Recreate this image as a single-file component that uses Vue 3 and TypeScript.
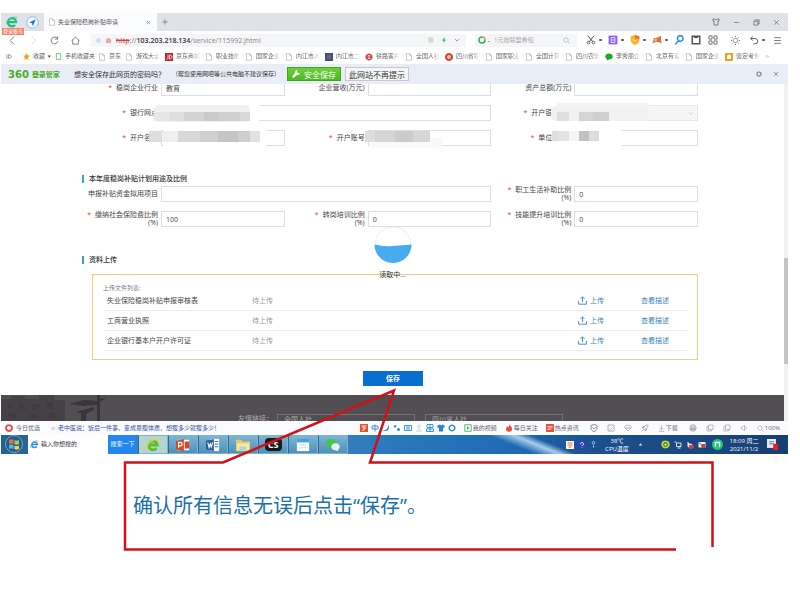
<script setup lang="ts">
import { h, type FunctionalComponent } from 'vue'

interface Shape { d: string; f?: string; s?: string; w?: number }

const G = '#666b70'
const icons: Record<string, Shape[]> = {
  browser: [{ d: 'M2.5 8h11A5.5 5.5 0 1 0 12 12', s: '#1fbf7a', w: 3 }, { d: 'M1 11C0 4 8 0 15 2', s: '#49d394', w: 1.2 }],
  browserOld: [{ d: 'M3 8h10A5 5 0 1 0 12 11.500', s: '#5cc02a', w: 3.2 }, { d: 'M1 13C0 6 8 0 15 2', s: '#e9d53c', w: 1.5 }],
  ie: [{ d: 'M3 8h10A5 5 0 1 0 12 11.500', s: '#2b8fe0', w: 2.8 }, { d: 'M1 14C0 7 8 0 15 2', s: '#55b4f2', w: 1.3 }],
  compass: [{ d: 'M8 1a7 7 0 1 0 .01 0z', s: '#7ab0e6', f: '#f4f9ff', w: 1 }, { d: 'M12 4L4 8l3.500 1L8.500 12.500z', f: '#1676d8' }],
  page: [{ d: 'M3 1.500h7l3 3v10H3zM9.500 2v3.500H13', s: '#a5a8ab', f: '#fff', w: 1.2 }],
  close: [{ d: 'M3 3l10 10M13 3L3 13', s: '#5b6066', w: 1.6 }],
  plus: [{ d: 'M8 1v14M1 8h14', s: '#555a60', w: 1.6 }],
  shirt: [{ d: 'M2 2h3l3 2 3-2h3v4h-2v8H4V6H2z', s: G, w: 1.7 }],
  min: [{ d: 'M2 8h12', s: G, w: 1.6 }],
  restore: [{ d: 'M2 5h9v9H2zM5 5V2h9v9h-3', s: G, w: 1.8 }],
  back: [{ d: 'M11 1L4 8l7 7', s: '#686c70', w: 1.5 }],
  forward: [{ d: 'M5 1l7 7-7 7', s: '#ccced0', w: 1.3 }],
  reload: [{ d: 'M13 4.500A6 6 0 1 0 14 9M13.500 1v4.500H9', s: '#666', w: 1.5 }],
  home: [{ d: 'M1 8l7-6 7 6M3 7v7.500h10V7', s: '#666', w: 1.4 }],
  shieldPale: [{ d: 'M8 2a6 6 0 1 0 .01 0z', f: '#cfe1f8' }],
  insecure: [{ d: 'M3 6h10v7H3zM5 6a3 3 0 0 1 6 0', s: '#e29b96', f: '#e8aaa5', w: 1.5 }],
  qr: [{ d: 'M2 2h12v12H2zM2 6h12M2 10h12M6 2v12M10 2v12', s: '#b9bcc0', w: 1.2 }],
  bolt: [{ d: 'M11 0L2 9h5l-2 7 9-9H9z', f: '#28bf74' }],
  down: [{ d: 'M2 5l6 6 6-6', s: G, w: 1.8 }],
  ring: [{ d: 'M14 8A6 6 0 1 1 8 2', s: '#20b66b', w: 3 }, { d: 'M8 2a6 6 0 0 1 6 6', s: '#f08a3c', w: 3 }],
  search: [{ d: 'M7 2a5 5 0 1 0 .01 0zM11 11l4 4', s: '#9a9ea3', w: 1.4 }],
  scissors: [{ d: 'M3 1l8 10M13 1L5 11M4 10a2.200 2.200 0 1 0 .01 0zM12 10a2.200 2.200 0 1 0 .01 0z', s: '#555', w: 1.6 }],
  purple: [{ d: 'M1 1h14v14H1z', f: '#8a5cf0' }, { d: 'M5 4v8h6V4zM5 8h6', s: '#fff', w: 1.2 }],
  shield: [{ d: 'M8 0l7 2.500V8c0 4-4 7-7 8-3-1-7-4-7-8V2.500z', f: '#f8b51e' }, { d: 'M8 0l7 2.500V6L9 9z', f: '#f06a26' }, { d: 'M5 7l3 3 4-4', s: '#fff', w: 1.5 }],
  game: [{ d: 'M1 14l2-9 6-1 5-3 1 13-4-3H5z', f: '#f06a2e' }, { d: 'M4 8h4M6 6v4', s: '#fff', w: 1.2 }],
  key: [{ d: 'M10 1a4.500 4.500 0 1 0 .01 0zM7 9l-5 6', s: '#2f8ae8', w: 2.4 }],
  box: [{ d: 'M2 2h12v12H2z', s: '#555', w: 2.4 }, { d: 'M5 2h6v3H5z', f: '#555' }],
  apps: [{ d: 'M1.500 1.500h5v5h-5zM9.500 1.500h5v5h-5zM1.500 9.500h5v5h-5zM9.500 9.500h5v5h-5z', s: '#666', w: 1.4 }],
  sun: [{ d: 'M8 4a4 4 0 1 0 .01 0zM8 0v2M8 14v2M0 8h2M14 8h2M2.500 2.500l1.500 1.500M12 12l1.500 1.500M13.500 2.500L12 4M4 12l-1.500 1.500', s: '#666', w: 1.4 }],
  undo: [{ d: 'M5 1L1 4.500 5 8M1 4.500h8a4.500 4.500 0 0 1 0 9.500H6', s: '#555', w: 1.6 }],
  menu: [{ d: 'M2 3h12M2 8h12M2 13h12', s: '#666', w: 1.5 }],
  panel: [{ d: 'M2 3v10M6 3v10M6 4h2l5 4-5 4H6', s: '#777', w: 1.6 }],
  star: [{ d: 'M8 0l2.400 5.300 5.600.7-4.200 3.900L13 16l-5-3-5 3 1.200-6.100L0 6l5.600-.7z', f: '#f5a21c' }],
  phone: [{ d: 'M3 1h10v14H3z', s: '#5bbd72', f: '#f1fbf3', w: 1.8 }],
  jd: [{ d: 'M0 0h16v16H0z', f: '#c8202f' }, { d: 'M6 3v8a2 2 0 0 1-3 1M9 4v8h1c5 0 5-8 0-8z', s: '#fff', w: 1.6 }],
  emblem: [{ d: 'M0 0h16v16H0z', f: '#34549a' }, { d: 'M4 4h8v8H4z', f: '#a64a5a' }],
  rail: [{ d: 'M8 1a7 7 0 1 0 .01 0z', f: '#cf4048' }, { d: 'M5 6a4 4 0 0 1 6 0M8 5v6M5 11h6', s: '#fff', w: 1.4 }],
  seal: [{ d: 'M8 0a8 8 0 1 0 .01 0z', f: '#d64127' }, { d: 'M8 4a4 4 0 1 0 .01 0z', f: '#f7c4a4' }],
  chat: [{ d: 'M8 1c4 0 7.500 2.500 7.500 6S12 13 8 13l-4 2v-3C1 11 .5 9 .5 7 .5 3.500 4 1 8 1z', f: '#1aad19' }],
  orange: [{ d: 'M0 0h16v16H0z', f: '#f0a020' }, { d: 'M8 3a4 4 0 0 0-4 4v5h8V7a4 4 0 0 0-4-4z', f: '#fff' }],
  more: [{ d: 'M2 4l4 4-4 4M8 4l4 4-4 4', s: '#777', w: 1.5 }],
  wrench: [{ d: 'M11 0a5 5 0 0 0-5 6L0 13l3 3 7-6a5 5 0 0 0 6-5l-3 2-3-3z', f: '#fff' }],
  gear: [{ d: 'M8 2.500a5.500 5.500 0 1 0 .01 0z', s: '#777c84', w: 3 }],
  upload: [{ d: 'M1 9v5.500h14V9M8 11V1.500M4.500 5L8 1.500 11.500 5', s: '#3a86b8', w: 1.6 }],
  record: [{ d: 'M8 2a6 6 0 1 0 .01 0z', s: '#e3473c', w: 3.5 }],
  speaker: [{ d: 'M2 6h3l4-4v12l-4-4H2zM12 5v6', s: '#a0a4a8', w: 1.3 }],
  ime: [{ d: 'M0 0h16v16H0z', f: '#ea5329' }, { d: 'M3 4h10M8 4v3M4 8h8M9 8c1 4-3 5-5 5', s: '#fff', w: 1.7 }],
  zh: [{ d: 'M2 4h12v6H2zM8 1v14', s: '#3b8fda', w: 1.9 }],
  moon: [{ d: 'M12 1c1 8-3 11-10 12 9 4 15-4 10-12z', f: '#2a82d8' }],
  comma: [{ d: 'M4 2a2.500 2.500 0 1 0 .01 0zM11 8a3 3 0 1 0 .01 0z', f: '#3489da' }],
  keyboard: [{ d: 'M1 3h14v10H1zM4 6h8M4 9.500h8', s: '#3489da', w: 1.8 }],
  user: [{ d: 'M8 2a2.500 2.500 0 1 0 .01 0zM2 14h12M8 7v7', s: '#bcc7d2', w: 1.6 }],
  grid: [{ d: 'M2 1h12v6H2zM1 10h14v5H1zM8 1v14', s: '#3489da', w: 1.8 }],
  tee: [{ d: 'M5 1L0 4l2 4 2-1v8h8V7l2 1 2-4-5-3-3 2z', f: '#2a82d8' }],
  cog: [{ d: 'M8 2.500a5.500 5.500 0 1 0 .01 0z', s: '#3489da', w: 3 }],
  play: [{ d: 'M1.500 1.500h13v13h-13z', s: '#35ad5d', w: 1.6 }, { d: 'M6 4.500l5 3.500-5 3.500z', f: '#35ad5d' }],
  fire: [{ d: 'M9 0c1 4 6 6 5 11-1 6-11 6-12 0-.5-3 2-4 2-7 2 1 2 2 2.500 3C8 5 9 3 9 0z', f: '#e8503a' }],
  hot: [{ d: 'M0 0h16v16H0z', f: '#e8503a' }, { d: 'M3 5h10M3 8h10M3 11h6', s: '#fff', w: 1.4 }],
  shieldLine: [{ d: 'M8 1l6 2v5c0 4-3 6-6 7-3-1-6-3-6-7V3zM5 7l3 3 3-4', s: '#777b80', w: 1.7 }],
  image: [{ d: 'M2 2h12v12H2zM5 9l2 2 4-4', s: '#999da1', w: 1.5 }],
  heart: [{ d: 'M8 14L2 8c-2-4 3-8 6-4 3-4 8 0 6 4zM3 8h3l1 2 2-4 1 2h3', s: '#999da1', w: 1.4 }],
  rocket: [{ d: 'M14 2c-5 0-8 3-9 6l3 3c4-2 6-4 6-9zM5 8H2l2-3h3M8 11v3l3-2V9M2 14l3-3', s: '#8c9094', w: 1.4 }],
  download: [{ d: 'M8 1v9M4 7l4 4 4-4M2 14.500h12', s: '#8c9094', w: 1.4 }],
  printer: [{ d: 'M4 6V2h8v4M2 6h12v5H2zM4 9h8v5H4z', s: '#8c9094', w: 1.4 }],
  pages: [{ d: 'M5 2h9v9H5zM5 5H2v9h9v-3', s: '#a0a4a8', w: 1.4 }],
  ppt: [{ d: 'M1 2h14v12H1z', f: '#fff' }, { d: 'M0 3l9-2v14l-9-2zM10 4h5v8h-5z', f: '#d14b28' }, { d: 'M3 11V5h2a1.500 1.500 0 0 1 0 4H3', s: '#fff', w: 1.3 }],
  word: [{ d: 'M5 1h10v14H5z', f: '#fff' }, { d: 'M0 3l9-2v14l-9-2z', f: '#2c5ca8' }, { d: 'M2 5l1.500 6L5 6l1 5 1.500-6', s: '#fff', w: 1.2 }, { d: 'M10 4h4M10 7h4M10 10h4', s: '#2c5ca8', w: 1 }],
  folder: [{ d: 'M0 2h6l1 2h9v11H0z', f: '#e9c865' }, { d: 'M1 6h14v8H1z', f: '#f8e7a2' }, { d: 'M4 10h8v4H4z', f: '#a9d3e9' }],
  note: [{ d: 'M1 2h14v13H1z', f: '#f4fafd' }, { d: 'M1 1h14v4H1z', f: '#4aa0dc' }, { d: 'M4 8h8M4 11h8', s: '#c5dbe8', w: 1 }],
  wechat: [{ d: 'M6 1C2 1 0 3 0 6c0 2 1 3 2 4v2l2-1c5 1 8-2 8-5S9 1 6 1z', f: '#44c552' }, { d: 'M11 6c-3 0-5 2-5 4s2 4 5 4l3 1v-2c3-2 2-7-3-7z', f: '#e9efe9' }],
  trayA: [{ d: 'M0 0h16v16H0z', f: '#fff' }, { d: 'M3 4h10M3 8h10M5 12h6', s: '#e4693f', w: 2 }],
  trayB: [{ d: 'M8 0a8 8 0 1 0 .01 0z', f: '#3143b5' }, { d: 'M5 6c0-4 6-4 6 0 0 2-3 2-3 4M8 12v1', s: '#fff', w: 1.8 }],
  trayC: [{ d: 'M8 1a3 3 0 1 0 .01 0zM8 10v5', s: '#bfe0fa', w: 2 }],
  up: [{ d: 'M8 5l4 5H4z', f: '#d7ecfa' }],
  eye: [{ d: 'M8 1a7.500 7 0 1 0 .01 0z', f: '#bada2e' }, { d: 'M8 4a4 4 0 1 0 .01 0z', f: '#42692a' }, { d: 'M8 6a2 2 0 1 0 .01 0z', f: '#fff' }],
  net: [{ d: 'M5 4h9v7H5zM1 2h4M7 14h6', s: '#eef6fc', w: 1.8 }],
  red: [{ d: 'M3 1l4 4 5 1 3 6-7 3-5-4z', f: '#f1e7e7' }, { d: 'M6 8h9v7H6z', f: '#d83a44' }],
  flag: [{ d: 'M1 2h14v11H1z', f: '#eee' }, { d: 'M7 6h7v8H7z', f: '#c24052' }, { d: 'M1 2l8 8', s: '#c24052', w: 2 }],
  music: [{ d: 'M8 0a8 8 0 1 0 .01 0z', f: '#1cc97a' }, { d: 'M5 11V5h6v6M4 11h1M10 11h1', s: '#fff', w: 2 }],
  news: [{ d: 'M0 0h13v13H0z', f: '#e7edf2' }, { d: 'M3 4h7M3 7h7', s: '#6b7680', w: 1.4 }, { d: 'M9 7h7v9H9z', f: '#e02128' }],
}

const Icon: FunctionalComponent<{ name: string }> = (props) =>
  h('svg', { viewBox: '0 0 16 16', 'aria-hidden': 'true' },
    (icons[props.name] ?? []).map((p) =>
      h('path', { d: p.d, fill: p.f ?? 'none', stroke: p.s ?? 'none', 'stroke-width': p.w ?? 0 })))
Icon.props = ['name']

const bookmarks = [
  { icon: 'page', text: '游戏大全' }, { icon: 'jd', text: '京东商城' }, { icon: 'page', text: '职业技能' },
  { icon: 'page', text: '国家企业' }, { icon: 'page', text: '内江市人' }, { icon: 'emblem', text: '内江市二' },
  { icon: 'rail', text: '铁路客户' }, { icon: 'page', text: '全国人社' }, { icon: 'seal', text: '四川省职' },
  { icon: 'page', text: '国家职业' }, { icon: 'page', text: '全国计算' }, { icon: 'page', text: '四川农信' },
  { icon: 'chat', text: '李秀丽企' }, { icon: 'page', text: '北京有谊' }, { icon: 'page', text: '国家企业' },
  { icon: 'orange', text: '鉴定考务' },
]

const tools = [
  { icon: 'scissors', menu: true }, { icon: 'purple', menu: true }, { icon: 'shield', menu: true },
  { icon: 'game', menu: true }, { icon: 'key' }, { icon: 'box' }, { icon: 'apps' },
]

interface Field {
  id: string; label: string; required?: boolean; value?: string; wide?: boolean
  unit?: string; short?: boolean; select?: boolean; mask?: string
}
const company: Field[] = [
  { id: 'industry', label: '稳岗企业行业', required: true, value: '教育' },
  { id: 'revenue', label: '企业营收(万元)' },
  { id: 'assets', label: '资产总额(万元)' },
  { id: 'branch', label: '银行网点', required: true, wide: true, mask: 'branch' },
  { id: 'bank', label: '开户银', required: true, short: true, select: true, mask: 'bank' },
  { id: 'holder', label: '开户名称', required: true, mask: 'holder' },
  { id: 'account', label: '开户账号', required: true, mask: 'account' },
  { id: 'unit', label: '单位', required: true, short: true, mask: 'unit' },
]
const plan: Field[] = [
  { id: 'project', label: '申报补贴资金拟用项目', wide: true },
  { id: 'living', label: '职工生活补助比例', unit: '(%)', required: true, value: '0' },
  { id: 'social', label: '缴纳社会保险费比例', unit: '(%)', required: true, value: '100' },
  { id: 'transfer', label: '转岗培训比例', unit: '(%)', required: true, value: '0' },
  { id: 'skill', label: '技能提升培训比例', unit: '(%)', required: true, value: '0' },
]
const sections = [
  { id: 'company', title: '', fields: company },
  { id: 'plan', title: '本年度稳岗补贴计划用途及比例', fields: plan },
]

/* Mosaic blocks: x, y, width, height, colour; origin is the top-left of the field cell */
type Block = [number, number, number, number, string]
const masks: Record<string, Block[]> = {
  branch: [[84, -2, 98, 20, '#fff'], [76, 0, 96, 17, '#f0f0f0'], [76, 7, 16, 9, '#e6e6e6'], [92, 7, 14, 9, '#dedede'], [106, 7, 20, 9, '#d3d3d3'], [126, 7, 14, 9, '#cacaca'], [140, 7, 22, 9, '#d0d0d0'], [162, 7, 10, 9, '#dadada']],
  holder: [[84, -1, 106, 18, '#fff'], [71, 1, 14, 11, '#dedede'], [84, 1, 16, 11, '#efefef'], [100, 1, 22, 11, '#d8d8d8'], [122, 1, 18, 11, '#cfcfcf'], [140, 1, 20, 11, '#c5c5c5'], [160, 1, 12, 11, '#cecece'], [172, 1, 10, 11, '#e2e2e2']],
  account: [[84, 12, 72, 6, '#fafafa'], [80, 1, 10, 11, '#dedede'], [90, 1, 20, 11, '#d5d5d5'], [110, 1, 18, 11, '#cbcbcb'], [128, 1, 17, 11, '#d6d6d6'], [145, 8, 12, 8, '#f8f8f8']],
  bank: [[66, -2, 92, 9, '#f3f3f3'], [60, 1, 98, 15, '#f1f1f1'], [66, 7, 12, 9, '#dedede'], [88, 7, 14, 9, '#d4d4d4'], [102, 7, 16, 9, '#cfcfcf']],
  unit: [[76, -1, 56, 18, '#fff'], [61, 1, 7, 10, '#dedede'], [68, 1, 10, 10, '#e5e5e5'], [78, 1, 10, 10, '#f5f5f5'], [88, 1, 10, 10, '#c2c2c2'], [98, 1, 10, 10, '#dcdcdc']],
}

const files = ['失业保险稳岗补贴申报审核表', '工商营业执照', '企业银行基本户开户许可证']
const imeIcons = ['ime', 'zh', 'moon', 'comma', 'keyboard', 'user', 'grid', 'tee', 'cog']
const feeds = [{ icon: 'play', text: '我的视频' }, { icon: 'fire', text: '每日关注' }, { icon: 'hot', text: '热点资讯' }]
const apps = ['browserOld', 'ppt', 'word', 'folder', 'cs', 'note', 'wechat']
</script>

<template>
  <main class="slide">
    <div class="browser">
      <header class="tabs">
        <Icon name="browser" class="i12" />
        <Icon name="compass" class="i13" />
        <div class="tab">
          <Icon name="page" class="i8" />
          <span>失业保险稳岗补贴申请</span>
          <button aria-label="关闭标签"><Icon name="close" class="i5" /></button>
        </div>
        <button aria-label="新标签"><Icon name="plus" class="i6" /></button>
        <div class="window">
          <button aria-label="皮肤"><Icon name="shirt" class="i8" /></button>
          <button aria-label="最小化"><Icon name="min" class="i7" /></button>
          <button aria-label="还原"><Icon name="restore" class="i7" /></button>
          <button aria-label="关闭"><Icon name="close" class="i7" /></button>
        </div>
        <span class="login">登录账号</span>
      </header>

      <div class="toolbar">
        <nav class="nav">
          <button aria-label="后退"><Icon name="back" class="i9" /></button>
          <button aria-label="前进"><Icon name="forward" class="i9" /></button>
          <button aria-label="刷新"><Icon name="reload" class="i9" /></button>
          <button aria-label="主页"><Icon name="home" class="i9" /></button>
        </nav>
        <div class="address">
          <Icon name="shieldPale" class="i7" />
          <Icon name="insecure" class="i7" />
          <span class="url"><s>http</s>://<b>103.203.218.134</b><i>/service/115992.jhtml</i></span>
          <Icon name="qr" class="i6" />
          <Icon name="bolt" class="i6" />
          <Icon name="down" class="i6" />
        </div>
        <div class="finder">
          <Icon name="ring" class="i8" />
          <span class="dot">.</span>
          <input aria-label="搜索" placeholder="1元抢联盟券包" />
          <Icon name="search" class="i7" />
        </div>
        <div class="tools">
          <button v-for="t in tools" :key="t.icon" :class="{ menu: t.menu }" :aria-label="t.icon"><Icon :name="t.icon" class="i10" /></button>
        </div>
        <div class="tools end">
          <button aria-label="亮度"><Icon name="sun" class="i9" /></button>
          <button class="menu" aria-label="撤销"><Icon name="undo" class="i9" /></button>
          <button aria-label="菜单"><Icon name="menu" class="i9" /></button>
        </div>
      </div>

      <nav class="bookmarks">
        <Icon name="panel" class="i7" />
        <a href="#" class="fav"><Icon name="star" class="i7" />收藏<small>▾</small></a>
        <a href="#" class="phone"><Icon name="phone" class="i7" />手机收藏夹</a>
        <a href="#" class="short"><Icon name="page" class="i8" />京东</a>
        <a v-for="(b, i) in bookmarks" :key="i" href="#" class="mark"><Icon :name="b.icon" class="i8" /><span>{{ b.text }}</span></a>
        <Icon name="more" class="i5" />
      </nav>

      <div class="prompt">
        <span class="brand"><b>360</b>登录管家</span>
        <span class="ask">想安全保存此网页的密码吗？</span>
        <span class="hint">（帮您使用网吧等公共电脑不建议保存）</span>
        <button class="safe"><Icon name="wrench" class="i8" />安全保存</button>
        <button class="never">此网站不再提示</button>
        <button class="gear" aria-label="设置"><Icon name="gear" class="i6" /></button>
        <button aria-label="关闭提示"><Icon name="close" class="i6" /></button>
      </div>

      <div class="viewport">
        <div class="page">
          <form class="form" @submit.prevent>
            <template v-for="s in sections" :key="s.id">
              <h2 v-if="s.title">{{ s.title }}</h2>
              <div class="fields">
                <div v-for="f in s.fields" :key="f.id" class="field" :class="{ wide: f.wide }">
                  <label :for="f.id" :class="{ short: f.short }">
                    <em v-if="f.required">*</em>
                    <span>{{ f.label }}<br v-if="f.unit" />{{ f.unit }}</span>
                  </label>
                  <select v-if="f.select" :id="f.id" disabled><option></option></select>
                  <input v-else :id="f.id" type="text" :value="f.value" />
                  <Icon v-if="f.select" name="down" class="i5 arrow" />
                  <svg v-if="f.mask" class="mosaic" width="200" height="16" aria-hidden="true">
                    <rect v-for="(b, i) in masks[f.mask]" :key="i" :x="b[0]" :y="b[1]" :width="b[2]" :height="b[3]" :fill="b[4]" :rx="b[3] > 14 ? 5 : 0" />
                  </svg>
                </div>
              </div>
            </template>

            <h2>资料上传</h2>
            <section class="uploads">
              <p>上传文件列表:</p>
              <table>
                <tbody>
                  <tr v-for="name in files" :key="name">
                    <td class="name">{{ name }}</td>
                    <td class="state">待上传</td>
                    <td class="act"><a href="#"><Icon name="upload" class="i9" />上传</a></td>
                    <td class="view"><a href="#">查看描述</a></td>
                  </tr>
                </tbody>
              </table>
            </section>
            <button class="save" type="submit">保存</button>
          </form>

          <footer class="foot">
            <svg class="skyline" viewBox="0 0 110 26" aria-hidden="true">
              <path d="M0 4h10V1h14v3h14V0h15v5h11v21H0z" fill="#444247" />
              <path d="M6 9h6v4H6zM18 8h5v6h-5zM31 9h7v5h-7zM46 7h6v7h-6zM8 18h7v5H8zM29 19h8v4h-8zM48 18h6v5h-6z" fill="#3e3c41" />
              <path d="M68 9l15-4 13 1V0h3v4l6-1-6 4v19h-3V10l-14 1zM75 17l18-5v3l-8 4v7h-5v-8z" fill="#38363b" />
            </svg>
            <span class="tip">友情链接：</span>
            <span class="drop">全国人社</span>
            <span class="drop narrow">四川省人社</span>
          </footer>

          <div class="loading" role="status">
            <svg viewBox="0 0 38 38" aria-hidden="true">
              <circle cx="19" cy="19" r="18" fill="#fff" stroke="#dfe6ec" stroke-dasharray="2 1" />
              <path d="M.5 18.500Q10 21 19 20t18.500-1.500A18.500 18.500 0 0 1 .5 18.500z" fill="#46abef" />
            </svg>
            <span>读取中...</span>
          </div>
        </div>
        <div class="scroll"><i></i></div>
      </div>

      <div class="status">
        <Icon name="record" class="i8" />
        <span class="today">今日优选</span>
        <Icon name="speaker" class="i5" />
        <a href="#" class="ad">老中医说：饭后一件事，变成易瘦体质，想瘦多少就瘦多少！</a>
        <div class="ime"><Icon v-for="n in imeIcons" :key="n" :name="n" class="i8" /></div>
        <div class="feeds"><a v-for="f in feeds" :key="f.text" href="#"><Icon :name="f.icon" class="i8" />{{ f.text }}</a></div>
        <div class="utils">
          <Icon name="shieldLine" class="i8" /><Icon name="image" class="i8" /><Icon name="heart" class="i8" /><Icon name="rocket" class="i8" />
        </div>
        <a href="#" class="down"><Icon name="download" class="i7" />下载</a>
        <div class="utils">
          <Icon name="printer" class="i8" /><Icon name="pages" class="i8" /><Icon name="pages" class="i8" /><Icon name="speaker" class="i8" />
        </div>
        <span class="zoom"><Icon name="search" class="i7" />100%</span>
      </div>

      <div class="taskbar">
        <svg class="orb" viewBox="0 0 18 18" aria-hidden="true">
          <circle cx="9" cy="9" r="8.500" fill="#265c8b" stroke="#6fa3c7" />
          <path d="M4 5q2-1.500 4.500 0v4Q6 8 4 9z" fill="#f06a35" /><path d="M9.500 5q2 1.500 4.500 0v4q-2.500 1.500-4.500 0z" fill="#a3d04a" />
          <path d="M4 10q2-1 4.500 0v4q-2.500-1.500-4.500 0z" fill="#58b7ee" /><path d="M9.500 10.500q2 1 4.500 0v3.500q-2.500 1.500-4.500 0z" fill="#fbd04b" />
        </svg>
        <div class="query">
          <Icon name="ie" class="i9" />
          <input aria-label="搜索内容" placeholder="输入你想搜的" />
          <button>搜索一下</button>
        </div>
        <button v-for="a in apps" :key="a" class="app" :aria-label="a">
          <span v-if="a === 'cs'" class="cs">CS</span>
          <Icon v-else :name="a" class="i14" />
        </button>
        <div class="tray">
          <Icon name="trayA" class="i8" /><Icon name="trayB" class="i8" /><Icon name="trayC" class="i7" />
          <span class="temp">38℃<br />CPU温度</span>
          <Icon name="up" class="i7" />
          <div class="marks"><Icon name="eye" class="i9" /><Icon name="net" class="i8" /><Icon name="red" class="i8" /><Icon name="flag" class="i8" /></div>
          <Icon name="music" class="i11" />
          <time>18:09 周二<br />2021/11/2</time>
          <Icon name="news" class="i11" />
        </div>
      </div>
    </div>

    <p class="note">确认所有信息无误后点击“保存”。</p>
    <svg class="callout" width="800" height="600" viewBox="0 0 800 600" aria-hidden="true">
      <path d="M676 549.500H125V462.500H223L394 390.500L370 462.500H712.500V547" fill="none" stroke="#d01218" stroke-width="2.500" />
    </svg>
  </main>
</template>

<style>
body { margin: 0; background: #fff; }
</style>

<style scoped>
* { box-sizing: border-box; }
.slide { position: relative; min-height: 600px; padding-top: 13px; overflow: hidden; font-family: "Open Sans", "Noto Sans CJK SC", sans-serif; font-size: 7px; line-height: 9px; color: #444; }
.slide svg { display: block; flex: none; }
button { display: flex; align-items: center; justify-content: center; padding: 0; border: 0; background: none; font: inherit; color: inherit; }
input, select { min-width: 0; padding: 0; border: 0; background: none; font: inherit; color: inherit; outline: 0; }
a { color: inherit; text-decoration: none; }
.i5 { width: 5px; height: 5px; }
.i6 { width: 6px; height: 6px; }
.i7 { width: 7px; height: 7px; }
.i8 { width: 8px; height: 8px; }
.i9 { width: 9px; height: 9px; }
.i10 { width: 10px; height: 10px; }
.i11 { width: 11px; height: 11px; }
.i12 { width: 12px; height: 12px; }
.i13 { width: 13px; height: 13px; }
.i14 { width: 14px; height: 14px; }

.browser { margin: 0 12px 0 1px; white-space: nowrap; }
.tabs { position: relative; display: flex; align-items: center; height: 18px; padding-left: 5px; gap: 8px; background: #dfe3e8; }
.tab { display: flex; align-items: center; align-self: stretch; width: 113px; margin-left: -3px; padding: 0 6px 0 4px; gap: 2px; background: #fbfcfd; font-size: 6px; color: #555; }
.tab button { margin-left: auto; }
.tab + button { margin-left: -3px; }
.window { display: flex; gap: 13px; margin-left: auto; padding-right: 8px; }
.login { position: absolute; left: 1px; top: 15px; padding: 0 1px; background: #f0856b; color: #fff; font-size: 5px; line-height: 7px; z-index: 1; }

.toolbar { display: flex; align-items: center; height: 18px; padding: 0 6px 0 7px; background: #fff; }
.nav { display: flex; gap: 12px; width: 83px; }
.address { display: flex; align-items: center; flex: 1; height: 13px; margin-right: 9px; padding: 0 6px 0 4px; gap: 7px; background: #f5f6f8; }
.address .i7 + .i7 { margin-left: -4px; }
.url { flex: 1; margin-left: -3px; color: #777; }
.url s { color: #d4403c; }
.url b { font-weight: 600; color: #333; }
.url i { font-style: normal; color: #888; }
.finder { display: flex; align-items: center; width: 102px; height: 13px; padding: 0 7px 0 3px; background: #f5f6f8; font-size: 6px; }
.finder input { flex: 1; }
.finder input::placeholder { color: #aaa; opacity: 1; }
.dot { width: 8px; padding-left: 2px; font-weight: 700; }
.tools { display: flex; gap: 7px; padding-left: 9px; }
.tools .menu::after { content: ""; width: 3px; height: 2px; margin: 0 -1px 0 3px; border-radius: 1px; background: #555; }
.tools.end { margin-left: 4px; gap: 10px; }
.tools.end .menu::after { margin-right: -2px; }

.bookmarks { display: flex; align-items: center; height: 15px; padding-left: 5px; background: #fff; font-size: 6px; color: #666; }
.bookmarks a { display: flex; align-items: center; gap: 3px; }
.bookmarks small { font-size: 5px; color: #333; }
.fav { width: 32px; margin-left: 10px; }
.phone { width: 43px; }
.bookmarks .short { width: 27px; }
.mark { flex: 0 1 40px; min-width: 0; }
.mark span { width: 24px; overflow: hidden; mask-image: linear-gradient(90deg, #000 65%, transparent); }

.prompt { display: flex; align-items: center; height: 20px; padding: 0 9px 0 7px; background: #e9edf6; color: #333; }
.brand { display: flex; align-items: center; gap: 3px; width: 66px; color: #4bab2b; font-weight: 700; }
.brand b { font-size: 10px; font-family: "DejaVu Sans", sans-serif; }
.ask { width: 98px; }
.hint { width: 115px; font-size: 6px; }
.safe { width: 54px; height: 14px; gap: 4px; border: 1px solid #44a31f; background: linear-gradient(#6fcf3c, #4cb823); color: #fff; font-size: 8px; }
.never { width: 64px; height: 14px; margin-left: 4px; border: 1px solid #c6cad0; background: #f5f6f8; font-size: 8px; }
.gear { margin: 0 11px 0 auto; }

.viewport { display: flex; overflow: hidden; background: #fff; }
.page { position: relative; flex: 1; min-width: 0; }
.form { margin-top: -4px; padding: 0 86px 9px 77px; }
.fields { display: grid; grid-template-columns: repeat(3, 1fr); gap: 9px 0; }
.field { position: relative; display: flex; height: 16px; align-items: center; }
.field.wide { grid-column: span 2; }
.field label { display: flex; justify-content: flex-end; width: 83px; padding-right: 3px; gap: 4px; text-align: right; line-height: 8px; }
.field label.short { padding-right: 22px; }
.field em { color: #e0413c; font-style: normal; }
.field input, .field select { flex: 1; height: 16px; padding: 0 4px; border: 1px solid #dcdfe2; background: #fff; appearance: none; }
.field select { background: #f1f1f1; }
.arrow { position: absolute; right: 5px; top: 6px; opacity: .5; }
.mosaic { position: absolute; left: 0; top: 0; overflow: visible; pointer-events: none; }
h2 { margin: 29px 0 3px 4px; padding-left: 5px; border-left: 2px solid #3c9fd8; font-size: 7px; line-height: 8px; font-weight: 500; color: #333; }
.uploads { margin: 10px 0 11px 14px; padding: 10px 10px 8px; border: 1px solid #efcd86; }
.uploads p { margin: 0; font-size: 6px; line-height: 6px; color: #777; }
table { width: 100%; border-spacing: 0; table-layout: fixed; }
td { height: 20px; padding: 0 0 0 4px; border-bottom: 1px solid #ececee; line-height: 9px; }
.name { width: 145px; }
.state { color: #999; }
.act { width: 63px; }
.view { width: 50px; }
td a { display: flex; align-items: center; gap: 3px; color: #3a86b8; }
.save { width: 60px; height: 15px; margin: 0 auto; position: relative; left: 5px; background: #086ecf; color: #fff; font-weight: 700; }
.foot { display: flex; align-items: flex-end; height: 26px; background: #514f53; color: #aaa; overflow: hidden; }
.skyline { width: 110px; height: 26px; }
.tip { margin-left: 127px; line-height: 5px; }
.drop { width: 138px; height: 7px; margin-left: 4px; padding-left: 6px; border: 1px solid #747276; border-bottom: 0; line-height: 10px; }
.drop.narrow { margin-left: 10px; }
.loading { position: absolute; left: 50%; top: 142px; display: flex; flex-direction: column; align-items: center; gap: 6px; transform: translateX(-50%); color: #333; }
.loading svg { width: 38px; height: 38px; }
.scroll { width: 4px; padding-top: 174px; background: #f0f1f3; }
.scroll i { display: block; height: 106px; background: #c3c4c6; }

.status { display: flex; align-items: center; height: 14px; padding: 0 8px 0 4px; background: #fafbfd; font-size: 6px; color: #666; }
.today { width: 38px; padding-left: 3px; }
.ad { padding-left: 2px; color: #3952a5; }
.ime { display: flex; gap: 3px; margin: 0 8px 0 auto; }
.feeds { display: flex; gap: 8px; }
.feeds a { display: flex; align-items: center; gap: 1px; }
.utils { display: flex; gap: 9px; margin-left: 11px; }
.down, .zoom { display: flex; align-items: center; gap: 1px; margin-left: 9px; }

.taskbar { display: flex; align-items: stretch; height: 19px; background: linear-gradient(22deg, transparent 64%, #a7cdec 67%, transparent 69%), linear-gradient(90deg, #23618e, #4b8cb8 25%, #2a78bb 50%, #1e6bb4 65%, #1c5292 74%, #183f73); }
.orb { width: 18px; height: 18px; margin: 0 5px 0 4px; }
.query { display: flex; align-items: center; width: 109px; margin-right: 1px; padding-left: 2px; gap: 2px; background: #fff; font-size: 6px; color: #222; }
.query input { flex: 1; }
.query input::placeholder { color: #333; opacity: 1; }
.query button { width: 29px; align-self: stretch; background: #2387ef; color: #fff; }
.app { width: 30px; border: 1px solid #83b1cf; border-left-color: #2f6a94; background: linear-gradient(#7db4d2, #4d90b9); }
.query + .app { background: #b3d6cf; }
.cs { width: 17px; border-radius: 4px; background: #17191c; color: #fff; font-size: 9px; line-height: 13px; font-weight: 700; }
.tray { display: flex; align-items: center; margin-left: auto; padding-right: 10px; gap: 4px; color: #fff; font-size: 6px; line-height: 8px; text-align: center; }
.temp { width: 32px; }
.marks { display: flex; align-items: center; gap: 4px; margin: 0 2px 0 13px; }
.tray time { width: 30px; margin: 0 4px 0 2px; }

.note { margin: 37px 90px 0 133px; font-size: 20px; line-height: 30px; color: #1c70a8; }
.callout { position: absolute; left: 0; top: 0; pointer-events: none; }
</style>
